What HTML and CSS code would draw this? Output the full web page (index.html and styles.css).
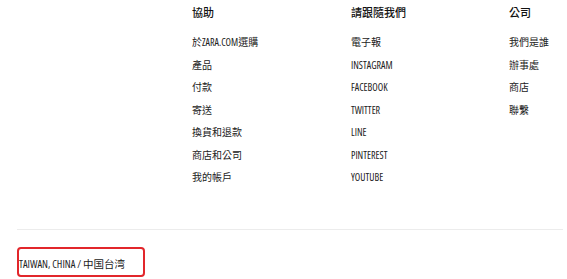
FILE: index.html
```html
<!DOCTYPE html>
<html lang="zh-Hant">
<head>
  <meta charset="UTF-8">
  <meta name="viewport" content="width=device-width, initial-scale=1.0">
  <title>ZARA Footer</title>
  <link rel="stylesheet" href="styles.css">
</head>
<body>

  <footer class="footer">
    <div class="footer-links">
      <div class="footer-col">
        <h4>協助</h4>
        <ul>
          <li>於ZARA.COM選購</li>
          <li>產品</li>
          <li>付款</li>
          <li>寄送</li>
          <li>換貨和退款</li>
          <li>商店和公司</li>
          <li>我的帳戶</li>
        </ul>
      </div>
      <div class="footer-col">
        <h4>請跟隨我們</h4>
        <ul>
          <li>電子報</li>
          <li>INSTAGRAM</li>
          <li>FACEBOOK</li>
          <li>TWITTER</li>
          <li>LINE</li>
          <li>PINTEREST</li>
          <li>YOUTUBE</li>
        </ul>
      </div>
      <div class="footer-col">
        <h4>公司</h4>
        <ul>
          <li>我們是誰</li>
          <li>辦事處</li>
          <li>商店</li>
          <li>聯繫</li>
        </ul>
      </div>
    </div>

    <hr class="divider">

    <div class="region">
      <span class="region-label">TAIWAN, CHINA / 中国台湾</span>
    </div>
  </footer>

</body>
</html>
```

FILE: styles.css
```css
body { margin: 0; background: #fff; font-family: "Open Sans", "Noto Sans CJK TC", sans-serif; font-stretch: 75%; color: #222; }
.footer { padding-top: 5px; }
.footer-links { display: grid; grid-template-columns: 159px 158px auto; padding-left: 192px; }
.footer-col h4 { margin: 0 0 10px 0; font-size: 11px; line-height: 16px; font-weight: 500; color: #111; }
.footer-col ul { list-style: none; margin: 0; padding: 0; }
.footer-col li { font-size: 10px; line-height: 22.5px; height: 22.5px; }
.divider { border: none; border-top: 1px solid #ececec; margin: 40px 4px 17px 17px; }
.region { padding-left: 17px; }
.region-label { display: inline-flex; align-items: center; box-sizing: border-box; height: 30px; width: 128px; padding: 3px 0 0 0; border: 2px solid #e2262b; border-radius: 4px; font-size: 10.5px; font-stretch: 87.5%; color: #222; }
```
